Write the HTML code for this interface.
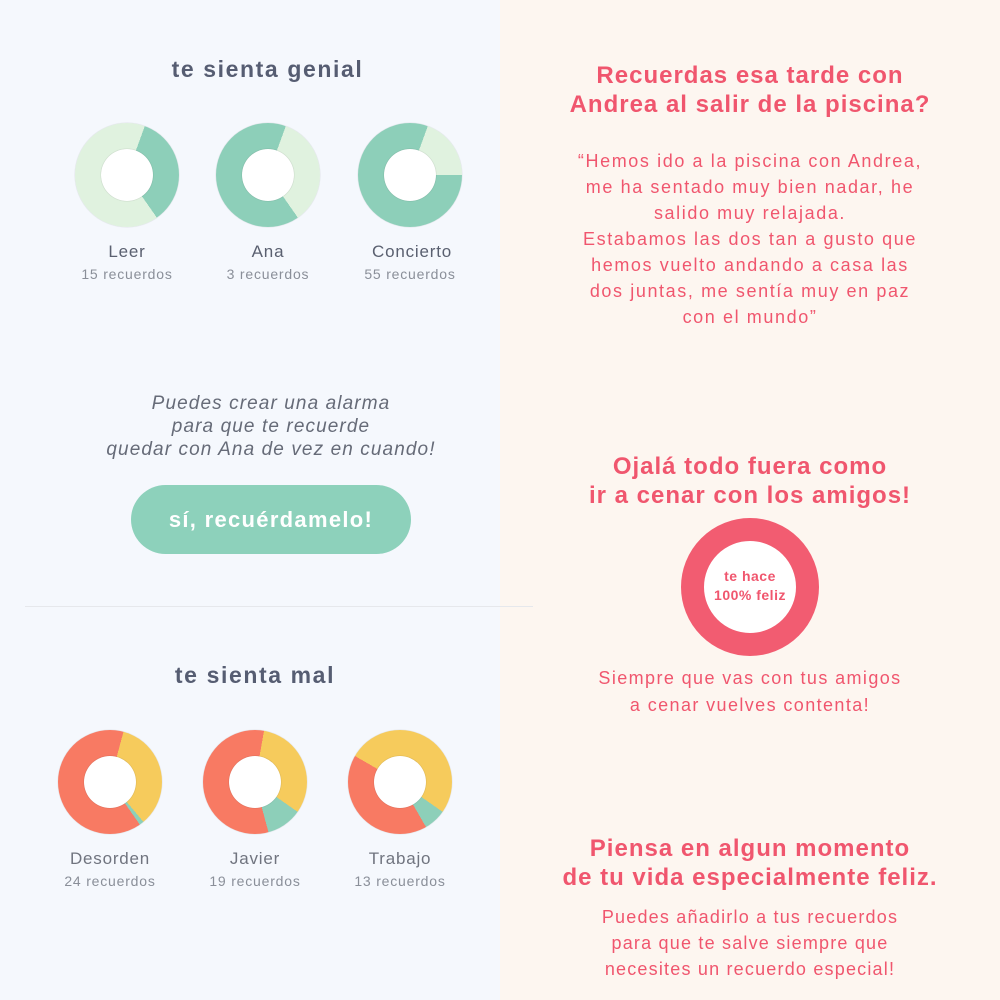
<!DOCTYPE html>
<html><head><meta charset="utf-8"><style>
*{margin:0;padding:0;box-sizing:border-box}
body{width:1000px;height:1000px;position:relative;font-family:"Liberation Sans",sans-serif;overflow:hidden;background:#f5f8fd}
#r{position:absolute;left:500px;top:0;width:500px;height:1000px;background:#fdf6f0}
.t{position:absolute;text-align:center;white-space:nowrap}
.d{position:absolute;width:104px;height:104px;border-radius:50%;box-shadow:0 0 1px rgba(0,0,0,.25)}
.d::after{content:"";position:absolute;left:26px;top:26px;width:52px;height:52px;border-radius:50%;background:#fff;box-shadow:0 0 1px rgba(0,0,0,.3)}
.n{font-size:17px;color:#5a6070;letter-spacing:.8px}
.c{font-size:14px;color:#8a8f99;letter-spacing:.8px}
.p{color:#f0566e;letter-spacing:1px}
</style></head><body>
<div id="r"></div>
<div class="t" style="left:0;width:535px;top:56px;font-size:23px;font-weight:bold;color:#565d72;letter-spacing:1.6px">te sienta genial</div>
<div class="d" style="left:75px;top:123px;background:conic-gradient(from 20deg,#8dcfb9 0 125deg,#e0f2df 125deg 360deg)"></div>
<div class="d" style="left:216px;top:123px;background:conic-gradient(from 20deg,#e0f2df 0 125deg,#8dcfb9 125deg 360deg)"></div>
<div class="d" style="left:358px;top:123px;background:conic-gradient(from 20deg,#e0f2df 0 70deg,#8dcfb9 70deg 360deg)"></div>
<div class="t n" style="left:77px;width:100px;top:242px">Leer</div>
<div class="t c" style="left:67px;width:120px;top:266px">15 recuerdos</div>
<div class="t n" style="left:218px;width:100px;top:242px">Ana</div>
<div class="t c" style="left:208px;width:120px;top:266px">3 recuerdos</div>
<div class="t n" style="left:352px;width:120px;top:242px">Concierto</div>
<div class="t c" style="left:350px;width:120px;top:266px">55 recuerdos</div>
<div class="t" style="left:0;width:542px;top:392px;font-size:19px;font-style:italic;color:#666b78;line-height:23px;letter-spacing:1.1px">Puedes crear una alarma<br>para que te recuerde<br>quedar con Ana de vez en cuando!</div>
<div style="position:absolute;left:131px;top:485px;width:280px;height:69px;border-radius:35px;background:#8dd1bb;color:#fff;font-weight:bold;font-size:22px;text-align:center;line-height:69px;letter-spacing:1.3px">sí, recuérdamelo!</div>
<div style="position:absolute;left:25px;top:606px;width:508px;height:1px;background:#e6e8ec"></div>
<div class="t" style="left:0;width:510px;top:662px;font-size:23px;font-weight:bold;color:#565d72;letter-spacing:1.6px">te sienta mal</div>
<div class="d" style="left:58px;top:730px;background:conic-gradient(from 15deg,#f6cb5c 0 125deg,#8dcfb9 125deg 130deg,#f87a63 130deg 360deg)"></div>
<div class="d" style="left:203px;top:730px;background:conic-gradient(from 10deg,#f6cb5c 0 115deg,#8dcfb9 115deg 155deg,#f87a63 155deg 360deg)"></div>
<div class="d" style="left:348px;top:730px;background:conic-gradient(from -60deg,#f6cb5c 0 185deg,#8dcfb9 185deg 210deg,#f87a63 210deg 360deg)"></div>
<div class="t n" style="left:50px;width:120px;top:849px;color:#70747f">Desorden</div>
<div class="t c" style="left:50px;width:120px;top:873px">24 recuerdos</div>
<div class="t n" style="left:195px;width:120px;top:849px;color:#70747f">Javier</div>
<div class="t c" style="left:195px;width:120px;top:873px">19 recuerdos</div>
<div class="t n" style="left:340px;width:120px;top:849px;color:#70747f">Trabajo</div>
<div class="t c" style="left:340px;width:120px;top:873px">13 recuerdos</div>
<div class="t p" style="left:500px;width:500px;top:61px;font-size:24px;font-weight:bold;line-height:29px">Recuerdas esa tarde con<br>Andrea al salir de la piscina?</div>
<div class="t p" style="left:500px;width:500px;top:148px;font-size:18px;line-height:26px;letter-spacing:1.6px">“Hemos ido a la piscina con Andrea,<br>me ha sentado muy bien nadar, he<br>salido muy relajada.<br>Estabamos las dos tan a gusto que<br>hemos vuelto andando a casa las<br>dos juntas, me sentía muy en paz<br>con el mundo”</div>
<div class="t p" style="left:500px;width:500px;top:452px;font-size:24px;font-weight:bold;line-height:29px">Ojalá todo fuera como<br>ir a cenar con los amigos!</div>
<div style="position:absolute;left:681px;top:518px;width:138px;height:138px;border-radius:50%;border:23px solid #f25c71;background:#fff"></div>
<div class="t p" style="left:650px;width:200px;top:567px;font-size:14px;font-weight:bold;line-height:19px;letter-spacing:.5px">te hace<br>100% feliz</div>
<div class="t p" style="left:500px;width:500px;top:665px;font-size:18px;line-height:27px;letter-spacing:1.4px">Siempre que vas con tus amigos<br>a cenar vuelves contenta!</div>
<div class="t p" style="left:500px;width:500px;top:834px;font-size:24px;font-weight:bold;line-height:29px">Piensa en algun momento<br>de tu vida especialmente feliz.</div>
<div class="t p" style="left:500px;width:500px;top:904px;font-size:18px;line-height:26px;letter-spacing:1.2px">Puedes añadirlo a tus recuerdos<br>para que te salve siempre que<br>necesites un recuerdo especial!</div>
</body></html>
